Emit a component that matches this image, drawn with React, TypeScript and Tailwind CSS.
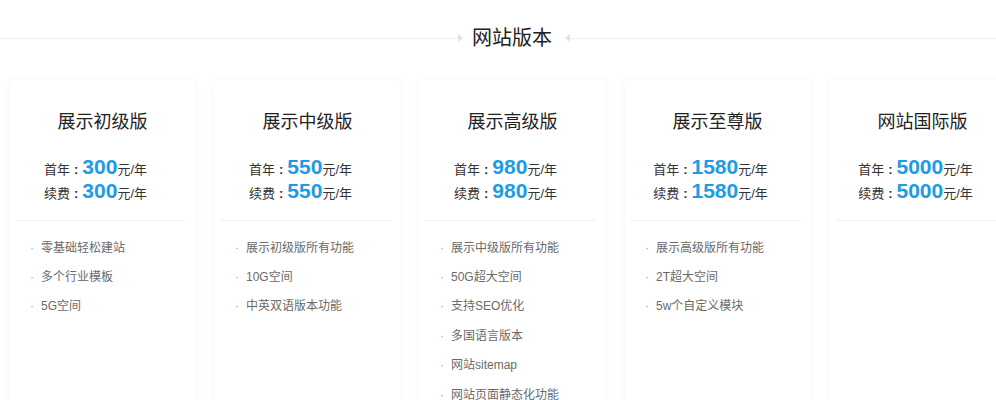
import React from "react";

interface Plan {
  name: string;
  price: string;
  features: string[];
}

const plans: Plan[] = [
  { name: "展示初级版", price: "300", features: ["零基础轻松建站", "多个行业模板", "5G空间"] },
  { name: "展示中级版", price: "550", features: ["展示初级版所有功能", "10G空间", "中英双语版本功能"] },
  {
    name: "展示高级版",
    price: "980",
    features: ["展示中级版所有功能", "50G超大空间", "支持SEO优化", "多国语言版本", "网站sitemap", "网站页面静态化功能"],
  },
  { name: "展示至尊版", price: "1580", features: ["展示高级版所有功能", "2T超大空间", "5w个自定义模块"] },
  { name: "网站国际版", price: "5000", features: [] },
];

const font = { fontFamily: '"Liberation Sans", "Noto Sans CJK SC", sans-serif' };

function PriceLine({ label, price }: { label: string; price: string }) {
  return (
    <div className="flex items-baseline justify-center h-[24px] text-[13px] text-[#333]">
      <span>{label}</span>
      <span className="mx-[4px] font-bold">:</span>
      <span className="text-[21px] font-bold text-[#1d9be6] leading-none">{price}</span>
      <span>元/年</span>
    </div>
  );
}

function Card({ plan }: { plan: Plan }) {
  return (
    <div className="w-[185px] shrink-0 min-h-[330px] bg-white rounded-[4px] shadow-[0_0_10px_rgba(0,0,0,0.04)]">
      <h3 className="pt-[29px] text-center text-[18px] leading-[26px] text-[#222]">{plan.name}</h3>
      <div className="mt-[21px] pr-[14px]">
        <PriceLine label="首年" price={plan.price} />
        <PriceLine label="续费" price={plan.price} />
      </div>
      <div className="mt-[16px] ml-[5px] mr-[9px] h-px bg-[#f2f2f2]" />
      <ul className="mt-[12px] pl-[20px]">
        {plan.features.map((f) => (
          <li key={f} className="flex items-center h-[29.4px] text-[12px] text-[#6a6a6a]">
            <span className="w-[11px] text-[#aaa]">·</span>
            <span>{f}</span>
          </li>
        ))}
      </ul>
    </div>
  );
}

export default function App() {
  return (
    <div className="w-[996px] h-[400px] overflow-hidden bg-white" style={font}>
      {/* Section header */}
      <div className="flex items-center pt-[24px] h-[52px]">
        <div className="w-[458px] h-px bg-[#efefef]" />
        <span className="w-0 h-0 border-y-[4px] border-y-transparent border-l-[5px] border-l-[#e3e3e3]" />
        <h2 className="ml-[9px] mr-[13px] text-[20px] leading-[28px] text-[#222]">网站版本</h2>
        <span className="w-0 h-0 border-y-[4px] border-y-transparent border-r-[5px] border-r-[#e3e3e3]" />
        <div className="flex-1 h-px bg-[#efefef]" />
      </div>

      {/* Plans */}
      <div className="flex gap-[20px] pl-[10px] pt-[28px]">
        {plans.map((p) => (
          <Card key={p.name} plan={p} />
        ))}
      </div>
    </div>
  );
}
